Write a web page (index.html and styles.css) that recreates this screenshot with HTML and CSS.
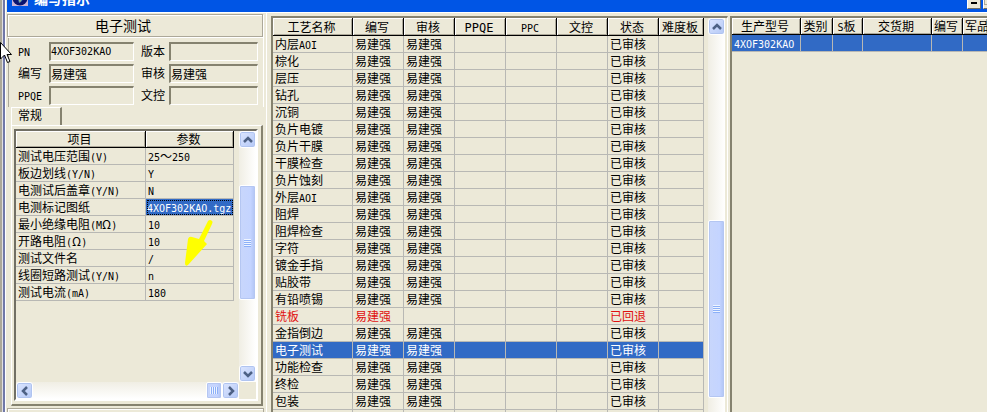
FILE: index.html
```html
<!DOCTYPE html>
<html lang="zh-CN">
<head>
<meta charset="utf-8">
<title>编写指示</title>
<link rel="stylesheet" href="styles.css">
</head>
<body>
<div class="edge"></div>
<div class="window">
  <header class="titlebar">
    <svg class="app-icon" width="16" height="16" viewBox="0 0 16 16"><rect width="16" height="16" fill="#c9b3d6"/><circle cx="8" cy="8" r="7.5" fill="#0a1470"/><path d="M5 5l4-2 3 3-2 5-3 2-1-4z" fill="#4a86b8"/><path d="M7 8h2l-1 5z" fill="#e8e060"/></svg>
    <h1>编写指示</h1>
    <div class="win-buttons">
      <button type="button" aria-label="最小化"><svg width="8" height="8" viewBox="0 0 8 8"><path d="M1 4h6v2H1z"/></svg></button>
      <button type="button" aria-label="最大化"><svg width="8" height="8" viewBox="0 0 8 8"><path d="M0 0h8v7H0zM1 2v4h6V2z" fill-rule="evenodd" fill="#aca899"/></svg></button>
    </div>
  </header>
  <main class="content">
    <section class="left">
      <h2 class="caption">电子测试</h2>
      <form class="info">
        <label class="en" for="pn">PN</label><input class="en" id="pn" value="4XOF302KAO">
        <label for="ver">版本</label><input id="ver">
        <label for="writer">编写</label><input id="writer" value="易建强">
        <label for="checker">审核</label><input id="checker" value="易建强">
        <label class="en" for="ppqe">PPQE</label><input id="ppqe">
        <label for="doc">文控</label><input id="doc">
      </form>
      <div class="tabs"><button type="button" class="tab">常规</button></div>
      <div class="page">
        <div class="scrollbox">
          <div class="view">
            <table class="grid params">
              <colgroup><col class="w-item"><col class="w-value"></colgroup>
              <thead><tr><th>项目</th><th>参数</th></tr></thead>
              <tbody>
                <tr><td>测试电压范围<span class="en">(V)</span></td><td><span class="en">25</span>～<span class="en">250</span></td></tr>
                <tr><td>板边划线<span class="en">(Y/N)</span></td><td><span class="en">Y</span></td></tr>
                <tr><td>电测试后盖章<span class="en">(Y/N)</span></td><td><span class="en">N</span></td></tr>
                <tr><td>电测标记图纸</td><td class="focus"><span class="en">4XOF302KAO.tgz</span></td></tr>
                <tr><td>最小绝缘电阻<span class="en">(M</span>Ω<span class="en">)</span></td><td><span class="en">10</span></td></tr>
                <tr><td>开路电阻<span class="en">(</span>Ω<span class="en">)</span></td><td><span class="en">10</span></td></tr>
                <tr><td>测试文件名</td><td><span class="en">/</span></td></tr>
                <tr><td>线圈短路测试<span class="en">(Y/N)</span></td><td><span class="en">n</span></td></tr>
                <tr><td>测试电流<span class="en">(mA)</span></td><td><span class="en">180</span></td></tr>
              </tbody>
            </table>
          </div>
          <div class="vbar">
            <button type="button" class="sb" aria-label="向上"><svg width="10" height="8" viewBox="0 0 10 8"><path d="M1 6l4-4 4 4"/></svg></button>
            <div class="track"><div class="space-a"></div><div class="thumb"><i class="grip"></i></div><div class="space-b"></div></div>
            <button type="button" class="sb" aria-label="向下"><svg width="10" height="8" viewBox="0 0 10 8"><path d="M1 2l4 4 4-4"/></svg></button>
          </div>
          <div class="hbar">
            <button type="button" class="sb" aria-label="向左"><svg width="8" height="10" viewBox="0 0 8 10"><path d="M6 1L2 5l4 4"/></svg></button>
            <div class="htrack"><div class="thumb"><i class="grip"></i></div></div>
            <button type="button" class="sb" aria-label="向右"><svg width="8" height="10" viewBox="0 0 8 10"><path d="M2 1l4 4-4 4"/></svg></button>
          </div>
        </div>
      </div>
      <div class="next-box"></div>
    </section>
    <section class="panel middle">
      <div class="view">
        <table class="grid process">
          <colgroup><col class="w-name"><col class="w-std" span="6"><col class="w-hard"></colgroup>
          <thead><tr><th>工艺名称</th><th>编写</th><th>审核</th><th><span class="en wide">PPQE</span></th><th><span class="en">PPC</span></th><th>文控</th><th>状态</th><th>难度板</th></tr></thead>
          <tbody>
            <tr><td>内层<span class="en">AOI</span></td><td>易建强</td><td>易建强</td><td></td><td></td><td></td><td>已审核</td><td></td></tr>
            <tr><td>棕化</td><td>易建强</td><td>易建强</td><td></td><td></td><td></td><td>已审核</td><td></td></tr>
            <tr><td>层压</td><td>易建强</td><td>易建强</td><td></td><td></td><td></td><td>已审核</td><td></td></tr>
            <tr><td>钻孔</td><td>易建强</td><td>易建强</td><td></td><td></td><td></td><td>已审核</td><td></td></tr>
            <tr><td>沉铜</td><td>易建强</td><td>易建强</td><td></td><td></td><td></td><td>已审核</td><td></td></tr>
            <tr><td>负片电镀</td><td>易建强</td><td>易建强</td><td></td><td></td><td></td><td>已审核</td><td></td></tr>
            <tr><td>负片干膜</td><td>易建强</td><td>易建强</td><td></td><td></td><td></td><td>已审核</td><td></td></tr>
            <tr><td>干膜检查</td><td>易建强</td><td>易建强</td><td></td><td></td><td></td><td>已审核</td><td></td></tr>
            <tr><td>负片蚀刻</td><td>易建强</td><td>易建强</td><td></td><td></td><td></td><td>已审核</td><td></td></tr>
            <tr><td>外层<span class="en">AOI</span></td><td>易建强</td><td>易建强</td><td></td><td></td><td></td><td>已审核</td><td></td></tr>
            <tr><td>阻焊</td><td>易建强</td><td>易建强</td><td></td><td></td><td></td><td>已审核</td><td></td></tr>
            <tr><td>阻焊检查</td><td>易建强</td><td>易建强</td><td></td><td></td><td></td><td>已审核</td><td></td></tr>
            <tr><td>字符</td><td>易建强</td><td>易建强</td><td></td><td></td><td></td><td>已审核</td><td></td></tr>
            <tr><td>镀金手指</td><td>易建强</td><td>易建强</td><td></td><td></td><td></td><td>已审核</td><td></td></tr>
            <tr><td>贴胶带</td><td>易建强</td><td>易建强</td><td></td><td></td><td></td><td>已审核</td><td></td></tr>
            <tr><td>有铅喷锡</td><td>易建强</td><td>易建强</td><td></td><td></td><td></td><td>已审核</td><td></td></tr>
            <tr class="returned"><td>铣板</td><td>易建强</td><td></td><td></td><td></td><td></td><td>已回退</td><td></td></tr>
            <tr><td>金指倒边</td><td>易建强</td><td>易建强</td><td></td><td></td><td></td><td>已审核</td><td></td></tr>
            <tr class="selected"><td>电子测试</td><td>易建强</td><td>易建强</td><td></td><td></td><td></td><td>已审核</td><td></td></tr>
            <tr><td>功能检查</td><td>易建强</td><td>易建强</td><td></td><td></td><td></td><td>已审核</td><td></td></tr>
            <tr><td>终检</td><td>易建强</td><td>易建强</td><td></td><td></td><td></td><td>已审核</td><td></td></tr>
            <tr><td>包装</td><td>易建强</td><td>易建强</td><td></td><td></td><td></td><td>已审核</td><td></td></tr>
            <tr><td></td><td></td><td></td><td></td><td></td><td></td><td></td><td></td></tr>
          </tbody>
        </table>
      </div>
      <div class="vbar">
        <button type="button" class="sb" aria-label="向上"><svg width="10" height="8" viewBox="0 0 10 8"><path d="M1 6l4-4 4 4"/></svg></button>
        <div class="track"><div class="space-c"></div><div class="thumb"><i class="grip"></i></div><div class="space-d"></div></div>
      </div>
    </section>
    <section class="panel right">
      <table class="grid products">
        <colgroup><col class="w-model"><col class="w-type"><col class="w-board"><col class="w-date"><col class="w-author"><col></colgroup>
        <thead><tr><th>生产型号</th><th>类别</th><th><span class="en">S</span>板</th><th>交货期</th><th>编写</th><th class="cut">军品</th></tr></thead>
        <tbody><tr class="selected"><td><span class="en">4XOF302KAO</span></td><td></td><td></td><td></td><td></td><td></td></tr></tbody>
      </table>
    </section>
  </main>
</div>
<svg class="arrow" width="34" height="50" viewBox="0 0 34 50"><path d="M27 4Q29 2 31 4Q32 5 31 7L23 24L26 27L7 48Q4 50 4 46L7 22Q8 19 11 20L18 22Z" fill="#ffff00"/></svg>
<svg class="cursor" width="13" height="22" viewBox="0 0 13 22"><path d="M.5 .5V17l4-4 3 7.500 2.500-1-3-7H11.500Z" fill="#fff" stroke="#000"/></svg>
</body>
</html>
```
FILE: styles.css
```css
* { box-sizing: border-box; }
html, body { height: 100%; }
body {
  margin: 0;
  display: flex;
  position: relative;
  overflow: hidden;
  background: #ece9d8;
  color: #000;
  font: 12px/16px "Noto Sans CJK SC", sans-serif;
}
h1, h2 { margin: 0; font-weight: normal; }
button, input { font: inherit; color: inherit; padding: 0; margin: 0; }
.en { font-family: "DejaVu Sans Mono", "Noto Sans CJK SC", monospace; font-size: 10px; }
.en.wide { font-size: 12px; }

.edge {
  flex: none;
  width: 7px;
  background: linear-gradient(90deg, #aca899 2px, #e0dfe3 2px 3px, #7078a8 3px 5px, #fff 5px 6px, #ece9d8 6px);
}
.window { flex: 1; min-width: 0; display: flex; flex-direction: column; }
.titlebar {
  flex: none;
  display: flex;
  align-items: flex-end;
  gap: 6px;
  height: 12px;
  padding: 0 0 6px 5px;
  background: #0055e5;
  color: #fff;
}
.titlebar h1 { flex: 1; font-size: 14px; line-height: 16px; font-weight: bold; }
.app-icon { flex: none; }
.win-buttons { display: flex; gap: 2px; height: 9px; align-items: flex-end; align-self: flex-start; }
.win-buttons button {
  width: 14px;
  height: 14px;
  display: grid;
  place-items: center;
  border: 1px solid;
  border-color: #fff #716f64 #716f64 #fff;
  background: #ece9d8;
}
.win-buttons button:last-child { width: 4px; overflow: hidden; border-right: 0; }

.content { flex: 1; min-height: 0; display: flex; border-top: 1px solid #fff; }
.left {
  flex: none;
  width: 260px;
  display: flex;
  flex-direction: column;
  padding-top: 1px;
  border-right: 1px solid #fff;
}
.caption {
  flex: none;
  width: 256px;
  height: 23px;
  padding-right: 24px;
  border: 1px solid #aca899;
  box-shadow: 1px 1px #fff, inset 1px 1px #fff;
  font-size: 14px;
  line-height: 20px;
  text-align: center;
}
.info {
  display: grid;
  grid-template-columns: 31px 85px 7px 28px 89px;
  grid-auto-rows: 19px;
  row-gap: 3px;
  margin: 1px 2px 0 1px;
  padding: 4px 0 2px 9px;
  border-left: 1px solid #aca899;
  border-right: 1px solid #fff;
}
.info label { line-height: 18px; white-space: nowrap; }
.info label.en { line-height: 22px; }
.info label:nth-of-type(even) { grid-column: 4; }
.info input {
  width: 100%;
  min-width: 0;
  height: 19px;
  padding: 0 0 2px;
  border: 1px solid;
  border-width: 2px 1px 1px 2px;
  border-color: #85826f #fff #fff #85826f;
  border-radius: 0;
  background: #ece9d8;
}
.tabs { flex: none; height: 18px; padding-left: 4px; }
.tab {
  width: 51px;
  height: 18px;
  padding: 0 0 4px 6px;
  border: 0;
  border-left: 1px solid #fff;
  border-top: 1px solid #fff;
  border-right: 2px solid #85826f;
  background: #ece9d8;
  text-align: left;
  line-height: 14px;
}
.page {
  flex: 1;
  min-height: 0;
  display: flex;
  margin: 0 3px 0 4px;
  padding: 3px 3px 3px 2px;
  border: 1px solid #fff;
  border-right: 2px solid #85826f;
  border-bottom: 2px solid #85826f;
}
.next-box {
  flex: none;
  height: 4px;
  margin: 2px 2px 0 0;
  border: 1px solid #aca899;
  border-bottom: 0;
  box-shadow: inset 1px 1px #fff;
}
.scrollbox {
  flex: 1;
  display: grid;
  grid-template-columns: 1fr 17px;
  grid-template-rows: 1fr 17px;
  border: 2px solid;
  border-color: #716f64 #fff #fff #716f64;
}
.view { min-width: 0; min-height: 0; overflow: hidden; }

.grid { table-layout: fixed; border-collapse: separate; border-spacing: 0; }
.grid th, .grid td { white-space: nowrap; overflow: hidden; font-weight: normal; line-height: 16px; }
.grid th {
  height: 18px;
  padding: 0 2px 0 0;
  border-right: 1px solid #000;
  border-bottom: 1px solid #000;
  box-shadow: inset 1px 1px #fff, inset -1px -1px #aca899;
  text-align: center;
}
.grid td {
  height: 17px;
  padding: 0 0 0 2px;
  border-right: 1px solid #b8b8b4;
  border-bottom: 1px solid #b8b8b4;
}
.grid span { line-height: 1; }
.grid .selected td { background: #316ac5; color: #fff; }
.grid .returned td { color: #e01010; }
.params { width: 218px; }
.params th { height: 17px; }
.grid .focus { padding-left: 1px; outline: 1px dotted #000; outline-offset: -2px; background: #316ac5; color: #fff; }
.w-item { width: 130px; }
.w-value { width: 88px; }
.process { width: 431px; }
.w-name { width: 80px; }
.w-std { width: 51px; }
.w-hard { width: 45px; }
.products { width: 100%; }
.products th { height: 17px; line-height: 14px; }
.products th.cut { text-align: left; padding-left: 2px; border-right: 0; }
.products td:last-child { border-right: 0; }
.w-model { width: 69px; }
.w-type { width: 32px; }
.w-board { width: 30px; }
.w-date { width: 69px; }
.w-author { width: 31px; }

.panel { margin-top: 3px; border-top: 2px solid #85826f; border-left: 2px solid #85826f; }
.middle { flex: none; width: 457px; margin-left: 4px; display: flex; justify-content: space-between; border-right: 1px solid #fff; }
.right { flex: 1; min-width: 0; margin-left: 2px; overflow: hidden; }
.middle .vbar { margin-right: 2px; }

.vbar { width: 17px; display: flex; flex-direction: column; background: linear-gradient(90deg, #f0eee4, #fff); }
.hbar { display: flex; background: linear-gradient(#f0eee4, #fff); }
.sb {
  flex: none;
  width: 17px;
  height: 17px;
  display: grid;
  place-items: center;
  border: 1px solid #fff;
  border-radius: 3px;
  background: linear-gradient(135deg, #dce6ff, #b4c8f6);
  box-shadow: inset 0 0 0 1px #b0c4f0;
}
.sb svg { fill: none; stroke: #4d6185; stroke-width: 2.500; }
.track { flex: 1; min-height: 0; display: flex; flex-direction: column; }
.space-a { flex: 38; }
.space-b { flex: 66; }
.space-c { flex: 186; }
.space-d { flex: 14; }
.track .thumb { flex: 114; }
.middle .thumb { flex: 178; }
.thumb {
  display: grid;
  place-items: center;
  border: 1px solid #fff;
  border-radius: 2px;
  background: linear-gradient(90deg, #c8d6fb, #c4d4ff 70%, #b0c4f4);
  box-shadow: inset 0 0 0 1px #b4c6f2;
}
.grip { width: 7px; height: 8px; background: repeating-linear-gradient(#eef4ff 0 1px, #8cb0f8 1px 2px); }
.htrack { flex: 1; display: flex; justify-content: flex-end; }
.htrack .thumb { width: 16px; }
.htrack .grip { height: 7px; width: 8px; background: repeating-linear-gradient(90deg, #eef4ff 0 1px, #8cb0f8 1px 2px); }

.arrow { position: absolute; left: 181px; top: 217px; }
.cursor { position: absolute; left: 0; top: 42px; }
```
